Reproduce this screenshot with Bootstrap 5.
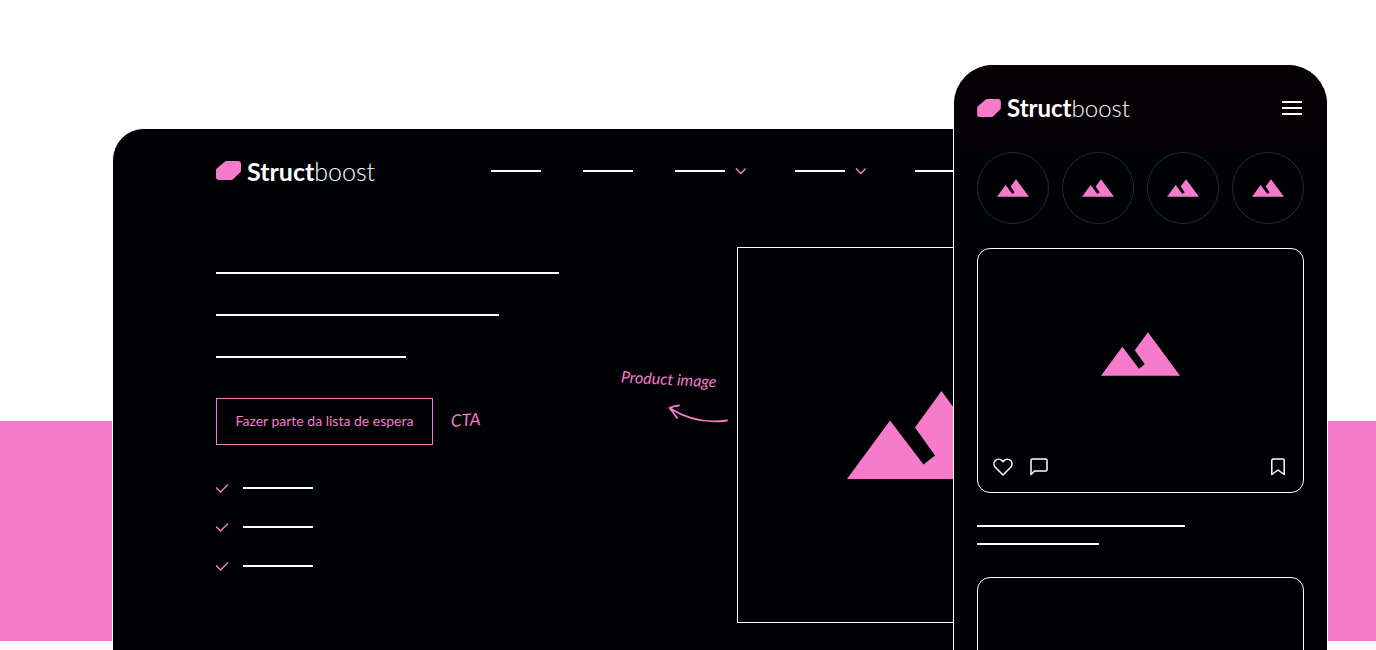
<!DOCTYPE html>
<html lang="pt-BR">
<head>
<meta charset="utf-8">
<meta name="viewport" content="width=device-width, initial-scale=1">
<title>Structboost</title>
<link href="https://cdn.jsdelivr.net/npm/bootstrap@5.3.0/dist/css/bootstrap.min.css" rel="stylesheet">
<style>
  :root { --pink: #f67bcb; --ink: #000105; }
  body { font-family: Lato, "Liberation Sans", sans-serif; background: #fff; }
  .stage { background: linear-gradient(var(--pink), var(--pink)) 0 421px / 100% 220px no-repeat; padding: 64px 48px 0 112px; }
  .desktop { margin-top: 64px; min-width: 0; background: var(--ink); border: 1px solid #fff; border-width: 1px 0 0 1px; border-radius: 32px 0 0 0; padding-left: 103px; }
  .phone { width: 375px; background: var(--ink); border: 1px solid #fff; border-bottom: 0; border-radius: 40px 40px 0 0; }
  .brand { color: #fff; font-size: 25px; line-height: 32px; font-weight: 700; gap: 6px; width: 275px; }
  .brand span span { font-weight: 300; }
  .brand-sm { font-size: 24px; width: auto; }
  .desk-head { height: 83px; }
  .desk-nav { gap: 42px; }
  .stroke { display: block; height: 2px; background: #fff; }
  .w-nav { width: 50px; }
  .chev { margin-left: 8px; }
  .hero { padding-top: 35px; }
  .lead-col { width: 405px; padding-top: 25px; }
  .headline { gap: 40px; }
  .cta-row { gap: 18px; margin-top: 40px; }
  .btn-wait { width: 217px; height: 47px; border: 1px solid var(--pink); border-radius: 0; color: var(--pink); font-size: 14px; line-height: 20px; padding: 0 0 2px; white-space: nowrap; }
  .btn-wait:hover { border-color: var(--pink); color: var(--ink); background: var(--pink); }
  .hand { color: var(--pink); font-style: italic; font-weight: 400; line-height: 24px; }
  .hand-cta { font-size: 17px; transform: rotate(-4deg); padding-bottom: 4px; }
  .checks { margin-top: 33px; gap: 19px; }
  .checks li { height: 20px; gap: 14px; }
  .note { width: 107px; margin-right: 9px; padding-top: 120px; }
  .hand-note { font-size: 16px; transform: rotate(3deg); white-space: nowrap; }
  .note svg { margin-top: 13px; }
  .shot { width: 378px; height: 376px; border: 1px solid #fff; }
  .phone-head { height: 87px; padding: 0 25px 2px 23px; background: #050003; border-radius: 39px 39px 0 0; }
  .menu-btn { width: 20px; height: 14px; line-height: 0; }
  .feed { padding: 0 23px; }
  .story { width: 72px; height: 72px; border: 1px solid #2b2b2e; }
  .post { height: 245px; margin-top: 24px; border: 1px solid #fff; border-radius: 13px; }
  .post-pic { padding-top: 18px; }
  .post-bar { height: 51px; padding: 0 14px; gap: 14px; }
  .post-bar button { line-height: 0; }
  .caption { margin-top: 32px; gap: 16px; }
  .next { margin-top: 32px; }
</style>
</head>
<body>
<svg width="0" height="0" class="position-absolute" aria-hidden="true">
  <symbol id="mountain" viewBox="0 0 159 88"><path fill="#f67bcb" d="M0 88 43 29.5 76.5 73.5 88 64.5 68 36.5 94.5 0 159 88Z"/></symbol>
  <symbol id="mark-shape" viewBox="0 0 25 19"><path fill="#f67bcb" d="M9 .5Q9.700 0 10.500 0H22Q25 0 25 3V9.500Q25 10.500 24.300 11.200L17 18.300Q16.300 19 15.300 19H3Q0 19 0 16V9.500Q0 8.300 .8 7.600Z"/></symbol>
  <symbol id="chevron" viewBox="0 0 20 12"><path d="M3 3.500 7.800 8.500 12.600 3.500" fill="none" stroke="#f67bcb" stroke-width="1.500"/></symbol>
  <symbol id="check" viewBox="0 0 13 12"><path d="M0 5.500 4.500 10 12 2.500" fill="none" stroke="#f67bcb" stroke-width="1.500"/></symbol>
</svg>

<main class="stage vh-100 overflow-hidden d-flex">
  <section class="desktop flex-fill overflow-hidden" aria-label="Desktop">
    <header class="desk-head d-flex align-items-center">
      <a href="#" class="brand d-flex align-items-center text-decoration-none flex-shrink-0">
        <svg width="25" height="19"><use href="#mark-shape"/></svg><span>Struct<span>boost</span></span>
      </a>
      <nav class="desk-nav d-flex align-items-center flex-shrink-0">
        <a href="#" aria-label="Link 1"><i class="stroke w-nav"></i></a>
        <a href="#" aria-label="Link 2"><i class="stroke w-nav"></i></a>
        <a href="#" aria-label="Menu 1" class="d-flex align-items-center"><i class="stroke w-nav"></i><svg class="chev" width="20" height="12"><use href="#chevron"/></svg></a>
        <a href="#" aria-label="Menu 2" class="d-flex align-items-center"><i class="stroke w-nav"></i><svg class="chev" width="20" height="12"><use href="#chevron"/></svg></a>
        <a href="#" aria-label="Link 3"><i class="stroke w-nav"></i></a>
      </nav>
    </header>

    <div class="hero d-flex align-items-start">
      <div class="lead-col flex-shrink-0">
        <div class="headline d-flex flex-column">
          <i class="stroke" style="width:343px"></i>
          <i class="stroke" style="width:283px"></i>
          <i class="stroke" style="width:190px"></i>
        </div>
        <div class="cta-row d-flex align-items-center">
          <button type="button" class="btn btn-wait">Fazer parte da lista de espera</button>
          <span class="hand hand-cta">CTA</span>
        </div>
        <ul class="checks list-unstyled d-flex flex-column mb-0">
          <li class="d-flex align-items-center"><svg width="13" height="12"><use href="#check"/></svg><i class="stroke" style="width:70px"></i></li>
          <li class="d-flex align-items-center"><svg width="13" height="12"><use href="#check"/></svg><i class="stroke" style="width:70px"></i></li>
          <li class="d-flex align-items-center"><svg width="13" height="12"><use href="#check"/></svg><i class="stroke" style="width:70px"></i></li>
        </ul>
      </div>
      <div class="note d-flex flex-column flex-shrink-0">
        <span class="hand hand-note align-self-start">Product image</span>
        <svg class="align-self-end" width="60" height="22" fill="none" stroke="#f67bcb" stroke-width="1.800" stroke-linecap="round" stroke-linejoin="round"><path d="M59 16.500Q28 21 1.500 4M11 1.500Q5 2 1.500 4Q5 8 9 14"/></svg>
      </div>
      <div class="shot d-flex align-items-center justify-content-center flex-shrink-0">
        <svg width="159" height="88" role="img" aria-label="Product"><use href="#mountain"/></svg>
      </div>
    </div>
  </section>

  <section class="phone flex-shrink-0" aria-label="Mobile">
    <header class="phone-head d-flex align-items-center justify-content-between">
      <a href="#" class="brand brand-sm d-flex align-items-center text-decoration-none">
        <svg width="24" height="18"><use href="#mark-shape"/></svg><span>Struct<span>boost</span></span>
      </a>
      <button type="button" class="menu-btn btn p-0 border-0" aria-label="Menu"><svg width="20" height="14" fill="#fff"><path d="M0 0H20V2H0ZM0 6H20V8H0ZM0 12H20V14H0Z"/></svg></button>
    </header>
    <div class="feed">
      <div class="d-flex justify-content-between">
        <a href="#" aria-label="Story 1" class="story rounded-circle d-flex align-items-center justify-content-center"><svg width="32" height="18"><use href="#mountain"/></svg></a>
        <a href="#" aria-label="Story 2" class="story rounded-circle d-flex align-items-center justify-content-center"><svg width="32" height="18"><use href="#mountain"/></svg></a>
        <a href="#" aria-label="Story 3" class="story rounded-circle d-flex align-items-center justify-content-center"><svg width="32" height="18"><use href="#mountain"/></svg></a>
        <a href="#" aria-label="Story 4" class="story rounded-circle d-flex align-items-center justify-content-center"><svg width="32" height="18"><use href="#mountain"/></svg></a>
      </div>
      <article class="post d-flex flex-column">
        <div class="post-pic flex-fill d-flex align-items-center justify-content-center"><svg width="79" height="44" role="img" aria-label="Post"><use href="#mountain"/></svg></div>
        <div class="post-bar d-flex align-items-center">
          <button type="button" class="btn p-0 border-0" aria-label="Like"><svg width="22" height="22" viewBox="0 0 22 22" fill="none" stroke="#fff" stroke-width="1.500" stroke-linejoin="round"><path d="M11 19 3.300 11.200A4.700 4.700 0 0 1 10 4.600L11 5.600 12 4.600A4.700 4.700 0 0 1 18.700 11.200Z"/></svg></button>
          <button type="button" class="btn p-0 border-0" aria-label="Comment"><svg width="22" height="22" viewBox="0 0 22 22" fill="none" stroke="#fff" stroke-width="1.500" stroke-linejoin="round"><path d="M3 18.500V4.500Q3 3 4.500 3H17.500Q19 3 19 4.500V13.500Q19 15 17.500 15H6.500Z"/></svg></button>
          <button type="button" class="btn p-0 border-0 ms-auto" aria-label="Save"><svg width="22" height="22" viewBox="0 0 22 22" fill="none" stroke="#fff" stroke-width="1.500" stroke-linejoin="round"><path d="M4.800 18.500V4.500Q4.800 3 6.300 3H15.700Q17.200 3 17.200 4.500V18.500L11 14Z"/></svg></button>
        </div>
      </article>
      <div class="caption d-flex flex-column">
        <i class="stroke" style="width:208px"></i>
        <i class="stroke" style="width:122px"></i>
      </div>
      <article class="post next"></article>
    </div>
  </section>
</main>
<script src="https://cdn.jsdelivr.net/npm/bootstrap@5.3.0/dist/js/bootstrap.bundle.min.js"></script>
</body>
</html>
